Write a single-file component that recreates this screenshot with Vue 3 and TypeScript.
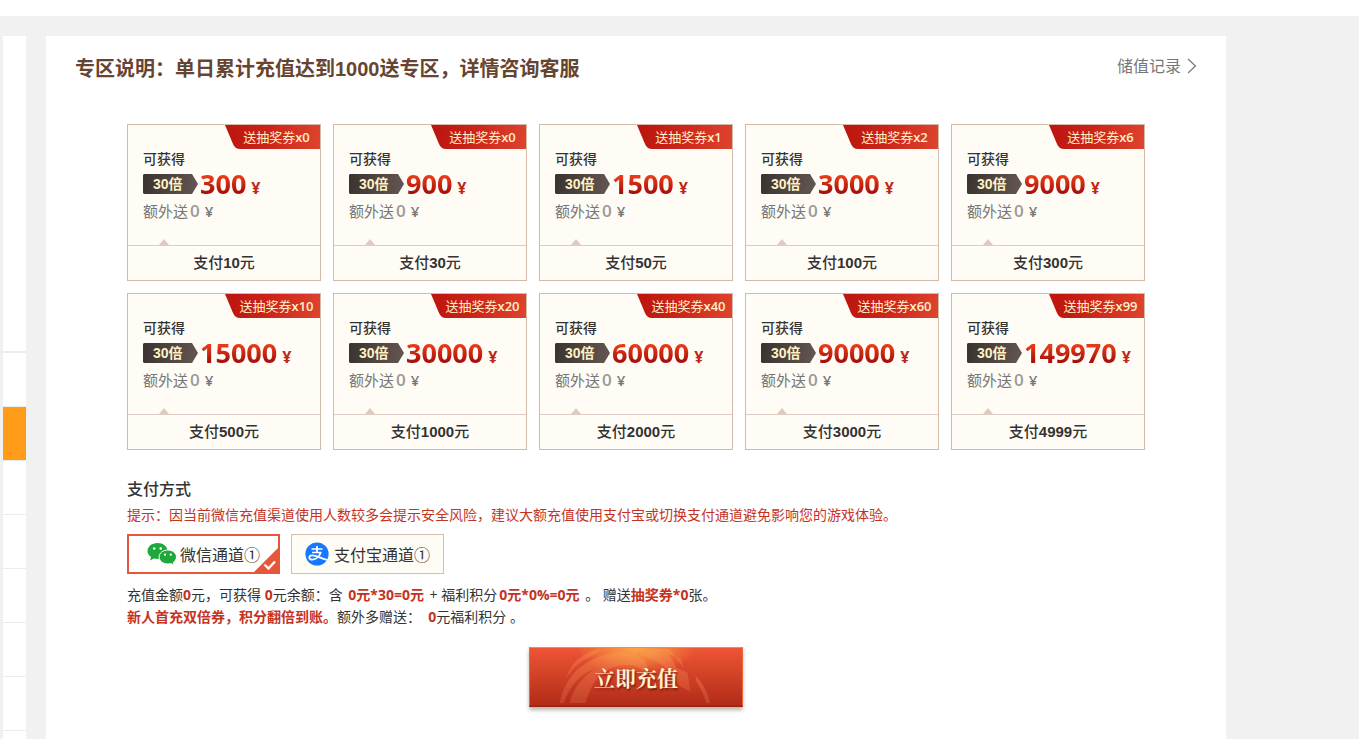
<script setup lang="ts">
import { ref } from 'vue'

interface Pack {
  amount: number
  pay: number
  tickets: number
}

const packs: Pack[] = [
  { amount: 300, pay: 10, tickets: 0 },
  { amount: 900, pay: 30, tickets: 0 },
  { amount: 1500, pay: 50, tickets: 1 },
  { amount: 3000, pay: 100, tickets: 2 },
  { amount: 9000, pay: 300, tickets: 6 },
  { amount: 15000, pay: 500, tickets: 10 },
  { amount: 30000, pay: 1000, tickets: 20 },
  { amount: 60000, pay: 2000, tickets: 40 },
  { amount: 90000, pay: 3000, tickets: 60 },
  { amount: 149970, pay: 4999, tickets: 99 },
]

const channel = ref<'wechat' | 'alipay'>('wechat')
const menuItems = [false, true, false, false, false, false, false, false]
</script>

<template>
  <div class="page" lang="zh-CN">
    <header class="topbar"></header>
    <div class="body">
      <aside class="side">
        <div class="side-head"></div>
        <div v-for="(active, i) in menuItems" :key="i" class="side-item" :class="{ active }"></div>
      </aside>
      <main class="panel">
        <div class="heading">
          <h1>专区说明：单日累计充值达到1000送专区，详情咨询客服</h1>
          <a href="#" class="records">储值记录
            <svg width="10" height="16" viewBox="0 0 10 16" aria-hidden="true"><path d="M1 1l7.500 7L1 15" fill="none" stroke="#777" stroke-width="1.200" /></svg>
          </a>
        </div>

        <div class="content">
          <div class="packs">
            <button v-for="p in packs" :key="p.pay" type="button" class="pack">
              <span class="ribbon">送抽奖券<span class="count">x{{ p.tickets }}</span></span>
              <span class="info">
                <span class="gain">可获得</span>
                <span class="amount-row">
                  <span class="times">30倍</span>
                  <span class="amount">{{ p.amount }}</span>
                  <span class="yen">¥</span>
                </span>
                <span class="extra">额外送<b class="zero">0</b><b>¥</b></span>
                <span class="pointer"></span>
              </span>
              <span class="pay">支付<b>{{ p.pay }}</b>元</span>
            </button>
          </div>

          <h2>支付方式</h2>
          <p class="hint">提示：因当前微信充值渠道使用人数较多会提示安全风险，建议大额充值使用支付宝或切换支付通道避免影响您的游戏体验。</p>

          <div class="channels">
            <label class="channel" :class="{ chosen: channel === 'wechat' }">
              <input v-model="channel" type="radio" name="channel" value="wechat" />
              <svg width="30" height="24" viewBox="0 0 30 24" aria-hidden="true">
                <path d="M10.500 1C4.900 1 .5 4.600.5 9c0 2.500 1.400 4.600 3.600 6l-1 3.400 3.800-2c1.200.3 2.300.5 3.600.5 5.600 0 10-3.500 10-8S16.100 1 10.500 1z" fill="#1fa83c" />
                <path d="M20.800 8c-4.900 0-8.700 3.100-8.700 7s3.800 7 8.700 7c1.100 0 2.100-.1 3.100-.4l3.200 1.800-.8-3c1.900-1.300 3.200-3.200 3.200-5.400 0-3.900-3.900-7-8.700-7z" fill="#1fa83c" stroke="#fff" stroke-width="1" />
                <g fill="#fff">
                  <circle cx="7.200" cy="6.500" r="1.300" /><circle cx="13.700" cy="6.500" r="1.300" />
                  <circle cx="18" cy="12.700" r="1.100" /><circle cx="23.800" cy="12.700" r="1.100" />
                </g>
              </svg>
              <span>微信通道①</span>
              <svg v-if="channel === 'wechat'" class="tick" width="24" height="24" viewBox="0 0 24 24" aria-hidden="true">
                <path d="M24 0v24H0z" fill="#e4573a" /><path d="M10.500 16.500l4 4L21 13.500" fill="none" stroke="#fff" stroke-width="2.400" />
              </svg>
            </label>
            <label class="channel" :class="{ chosen: channel === 'alipay' }">
              <input v-model="channel" type="radio" name="channel" value="alipay" />
              <svg width="24" height="24" viewBox="0 0 24 24" aria-hidden="true">
                <circle cx="12" cy="12" r="11.600" fill="#1677ff" />
                <g fill="none" stroke="#fff">
                  <path d="M6.500 7h11M12 4v6.500M7 10.500h9.500" stroke-width="1.700" />
                  <path d="M15.700 10.500c-1.200 3.600-4.600 7.200-8.200 7.200-2 0-3.200-.9-3.200-2.200s1.200-2.200 3-2.200c3.600 0 8.700 2.900 15 4.700" stroke-width="1.800" />
                </g>
              </svg>
              <span>支付宝通道①</span>
            </label>
          </div>

          <p class="summary">充值金额<b>0</b>元，可获得 <b>0</b>元余额：含 <b class="formula">0元*30=0元</b> + 福利积分<b class="formula">0元*0%=0元</b> 。 赠送<b>抽奖券*0</b>张。</p>
          <p class="summary"><b>新人首充双倍券，积分翻倍到账。</b>额外多赠送：&nbsp; <b>0</b>元福利积分 。</p>

          <button type="button" class="submit">
            <svg class="submit-art" viewBox="0 0 214 60" preserveAspectRatio="none" aria-hidden="true">
              <defs>
                <linearGradient id="ray" x1="0" y1="0" x2="0" y2="1">
                  <stop offset="0" stop-color="#ffa05a" stop-opacity=".34" />
                  <stop offset="1" stop-color="#ff9566" stop-opacity=".2" />
                </linearGradient>
              </defs>
              <g fill="url(#ray)">
                <path d="M36 33C42 13 55 4 72 1l-6 5C54 12 43 20 36 33z" />
                <path d="M30 58C35 30 55 9 88 5c22-1 34 9 30 22-8-10-24-12-38-5C64 31 60 45 56 58H40c4-16 13-29 28-37C50 27 40 40 34 58z" />
                <path d="M113 8c19 6 30 17 38 32l11 6-3-20-11-5-8-15 12 5 3 10-14-20h-18z" />
                <path d="M167 29c7 8 12 17 15 29h-4c-2-8-6-16-10-23z" />
              </g>
            </svg>
            <span class="submit-text">立即充值</span>
          </button>
        </div>
      </main>
    </div>
  </div>
</template>

<style>
body {
  background: #f1f1f1;
}
</style>

<style scoped>
.page {
  display: flex;
  flex-direction: column;
  min-height: 100vh;
  background: #f1f1f1;
  color: #333;
  font-family: "Open Sans", "Noto Sans CJK SC", sans-serif;
  font-size: 14px;
}
.page * {
  box-sizing: border-box;
}
h1, h2, p {
  margin: 0;
}
button {
  font: inherit;
  color: inherit;
  cursor: pointer;
}
.topbar {
  height: 16px;
  background: #fff;
}
.body {
  flex: 1;
  display: flex;
  gap: 20px;
  padding: 20px 133px 0 3px;
}
.side {
  flex: 0 0 23px;
  height: calc(100vh - 36px);
  overflow: hidden;
  background: #fff;
}
.side-head {
  height: 317px;
  border-bottom: 2px solid #ececec;
}
.side-item {
  height: 54px;
  border-bottom: 1px solid #ececec;
}
.side-item.active {
  background: #ff9c1a;
}
.panel {
  flex: 1;
  min-width: 0;
  background: #fff;
}
.heading {
  display: flex;
  justify-content: space-between;
  align-items: flex-start;
  padding: 16px 29px 0;
}
h1 {
  color: #67442f;
  font-family: "Liberation Sans", "Noto Sans CJK SC", sans-serif;
  font-size: 20px;
  line-height: 34px;
  font-weight: 700;
}
.records {
  display: flex;
  align-items: center;
  gap: 6px;
  color: #777;
  font-size: 16px;
  line-height: 28px;
  text-decoration: none;
}
.content {
  padding: 38px 81px 24px;
}
.packs {
  display: grid;
  grid-template-columns: repeat(5, 1fr);
  gap: 12px;
}
.pack {
  position: relative;
  display: flex;
  flex-direction: column;
  padding: 0;
  border: 1px solid #d3baa9;
  background: #fffcf5;
  text-align: left;
}
.ribbon {
  position: absolute;
  top: 0;
  right: 0;
  width: 95px;
  height: 24px;
  padding-left: 8px;
  background: linear-gradient(100deg, #bd1710 10%, #cc2418 45%, #de442f);
  clip-path: path("M0 0H95V24H15Q10 24 8 19Z");
  color: #fff0c8;
  font-size: 13px;
  line-height: 24px;
  text-align: center;
}
.count {
  font-weight: 600;
}
.info {
  position: relative;
  display: flex;
  flex-direction: column;
  height: 121px;
  padding: 24px 0 0 15px;
  border-bottom: 1px solid #decbc1;
}
.gain {
  color: #333;
  font-weight: 500;
  line-height: 20px;
}
.amount-row {
  display: flex;
  align-items: baseline;
  height: 30px;
  line-height: 30px;
  white-space: nowrap;
}
.times {
  width: 55px;
  height: 20px;
  padding-left: 10px;
  background: linear-gradient(100deg, #393330, #655753);
  clip-path: polygon(0 1px, 1px 0, 49px 0, 55px 10px, 49px 20px, 1px 20px, 0 19px);
  color: #fff2c2;
  font-family: "Liberation Sans", "Noto Sans CJK SC", sans-serif;
  font-size: 14px;
  font-weight: 700;
  line-height: 20px;
  align-self: center;
}
.amount {
  margin-left: 2px;
  background: linear-gradient(#e93a18 25%, #a50f0b 80%);
  background-clip: text;
  -webkit-background-clip: text;
  color: transparent;
  font-size: 27px;
  font-weight: 700;
}
.yen {
  margin-left: 5px;
  color: #bd2615;
  font-size: 16px;
  font-weight: 700;
}
.extra {
  display: flex;
  align-items: baseline;
  color: #777;
  font-size: 15px;
  line-height: 24px;
}
.extra b {
  font-weight: 600;
}
.extra .zero {
  margin: 0 5px 0 2px;
  color: #999;
  font-size: 17px;
}
.pointer {
  position: absolute;
  left: 31px;
  bottom: 0;
  border: 5px solid transparent;
  border-top: 0;
  border-bottom: 6px solid #decbc1;
}
.pay {
  font-family: "Liberation Sans", "Noto Sans CJK SC", sans-serif;
  font-size: 15px;
  font-weight: 500;
  line-height: 34px;
  text-align: center;
}
h2 {
  margin-top: 27px;
  font-size: 16px;
  line-height: 24px;
  font-weight: 500;
}
.hint {
  margin-top: 3px;
  color: #c5331f;
  line-height: 22px;
}
.channels {
  display: flex;
  gap: 11px;
  margin: 8px 0 10px;
}
.channel {
  position: relative;
  display: flex;
  align-items: center;
  justify-content: center;
  gap: 5px;
  width: 153px;
  height: 40px;
  border: 1px solid #d3c0b1;
  background: #fffcf5;
  font-family: "Noto Sans CJK SC", sans-serif;
  font-size: 16px;
  white-space: nowrap;
  cursor: pointer;
}
.channel.chosen {
  gap: 3px;
  border: 2px solid #e4573a;
  background: #fff;
}
.channel input {
  position: absolute;
  opacity: 0;
}
.tick {
  position: absolute;
  right: 0;
  bottom: 0;
}
.summary {
  line-height: 22px;
}
.summary b {
  color: #c5331f;
}
.summary .formula {
  padding: 0 2px;
}
.submit {
  position: relative;
  display: block;
  width: 214px;
  height: 60px;
  margin: 19px auto 0;
  padding: 0;
  border: 1px solid #e9673c;
  border-top-color: #f8894e;
  border-bottom: 2px solid #982716;
  background: radial-gradient(ellipse 60px 26px at 50% 0, #fba747, transparent), linear-gradient(#ee5535, #b22c18);
  box-shadow: 0 3px 4px #b5b5ac;
}
.submit-art {
  position: absolute;
  inset: 0;
  width: 100%;
  height: 100%;
}
.submit-text {
  position: relative;
  color: #fff3cf;
  font-family: "Noto Serif CJK SC", "Noto Sans CJK SC", serif;
  font-size: 21px;
  font-weight: 700;
  text-shadow: 1px 2px 2px #7b2012;
}
</style>
